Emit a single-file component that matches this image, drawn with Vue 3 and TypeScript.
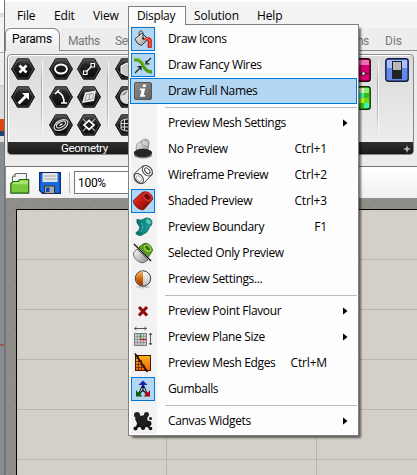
<script setup lang="ts">
interface Entry {
  kind: 'item' | 'sep'
  label?: string
  icon?: string
  shortcut?: string
  checked?: boolean
  active?: boolean
  submenu?: boolean
}

const menuBar: { label: string; cls: string }[] = [
  { label: 'File', cls: 'file' },
  { label: 'Edit', cls: 'edit' },
  { label: 'View', cls: 'view' },
  { label: 'Display', cls: 'display' },
  { label: 'Solution', cls: 'solution' },
  { label: 'Help', cls: 'help' },
]

const entries: Entry[] = [
  { kind: 'item', label: 'Draw Icons', icon: 'bucket', checked: true },
  { kind: 'item', label: 'Draw Fancy Wires', icon: 'wires', checked: true },
  { kind: 'item', label: 'Draw Full Names', icon: 'info', active: true },
  { kind: 'sep' },
  { kind: 'item', label: 'Preview Mesh Settings', submenu: true },
  { kind: 'item', label: 'No Preview', icon: 'none', shortcut: 'Ctrl+1' },
  { kind: 'item', label: 'Wireframe Preview', icon: 'wireframe', shortcut: 'Ctrl+2' },
  { kind: 'item', label: 'Shaded Preview', icon: 'shaded', shortcut: 'Ctrl+3', checked: true },
  { kind: 'item', label: 'Preview Boundary', icon: 'boundary', shortcut: 'F1' },
  { kind: 'item', label: 'Selected Only Preview', icon: 'selected' },
  { kind: 'item', label: 'Preview Settings...', icon: 'settings' },
  { kind: 'sep' },
  { kind: 'item', label: 'Preview Point Flavour', icon: 'cross', submenu: true },
  { kind: 'item', label: 'Preview Plane Size', icon: 'plane', submenu: true },
  { kind: 'item', label: 'Preview Mesh Edges', icon: 'mesh', shortcut: 'Ctrl+M' },
  { kind: 'item', label: 'Gumballs', icon: 'gumball', checked: true },
  { kind: 'sep' },
  { kind: 'item', label: 'Canvas Widgets', icon: 'splat', submenu: true },
]

/* Glyphs for the drop-down, drawn on a 24 x 24 grid */
const menuIcons: Record<string, string> = {
  bucket: `<path d="M4 12 11 6 17 12 10.500 18.500 6.500 16.500Z" fill="url(#metal)" stroke="#333"/>
    <path d="M8.500 9C6.500 2.500 12 2.500 12 7v4" fill="none" stroke="#333"/><circle cx="12" cy="11.500" r="1.100" fill="#222"/>
    <path d="M12.500 12.500C16 10 20.500 9.500 20.500 14v6.500h-3.500v-6c0-2-2-1.500-4.500-2Z" fill="#e8241a" stroke="#a80f0f" stroke-width=".6"/><path d="M14 12.300q4.500-2 5 2.200v5" fill="none" stroke="#ff9584" stroke-width=".8"/>`,
  wires: `<path d="M3 6.500C10 6.500 11 10 13 14s4 5 8 5" fill="none" stroke="#4f9d19" stroke-width="3.400"/>
    <path d="M3 5.500C10 5.500 12 9.500 14 13.500" fill="none" stroke="#8ed23c" stroke-width="1"/>
    <path d="m20 5-5.500 5.500M15 7.500v3.300h3.300M4 20l6-6M6.500 13.700H10v3.500" fill="none" stroke="#18241c" stroke-width="1.200"/>`,
  info: `<rect x="3.500" y="3.500" width="17" height="17" rx="1.500" fill="url(#slate)" stroke="#555"/>
    <path d="M12.200 5.500h3l-.6 2.500h-3ZM9 9.500h5.300l-1.700 6.500h1.700l-.5 1.800H9l1.600-6.500H8.600Z" fill="#fff"/>`,
  none: `<path d="M6 7 13 2.500c3-1 5 1 5 3L17 13l-10 3-2-5Z" fill="url(#metal)" stroke="#777" stroke-width=".7"/><ellipse cx="14" cy="6" rx="4" ry="3" transform="rotate(30 14 6)" fill="#ccc" stroke="#888" stroke-width=".7"/>
    <ellipse cx="12" cy="18.500" rx="9" ry="3" fill="#8c8c8c"/><ellipse cx="12" cy="16" rx="9.200" ry="4.200" fill="#25282a"/>`,
  wireframe: `<path d="M3 11 11 3.500c4-2 10 3 10.500 7.500L13 20c-4 2-10-3-10-9Z" fill="#fff" stroke="#444" stroke-width="1"/>
    <ellipse cx="16.300" cy="7.800" rx="5.800" ry="4.300" transform="rotate(48 16.300 7.800)" fill="#fff" stroke="#444"/><ellipse cx="16.300" cy="7.800" rx="3.400" ry="2" transform="rotate(48 16.300 7.800)" fill="none" stroke="#444"/>
    <ellipse cx="7.800" cy="15.500" rx="5.500" ry="4" transform="rotate(48 7.800 15.500)" fill="none" stroke="#444"/><ellipse cx="8" cy="15.500" rx="3.300" ry="2" transform="rotate(48 8 15.500)" fill="none" stroke="#888" stroke-width=".7"/>`,
  shaded: `<path d="M2.500 11.500 11 3.500c4-2 10 2.500 10.500 7L13 20.500c-4 1.500-11-4-10.500-9Z" fill="url(#red)" stroke="#6c0909" stroke-width=".8"/>
    <ellipse cx="16.300" cy="7.800" rx="5.700" ry="4.300" transform="rotate(42 16.300 7.800)" fill="#d9342a" stroke="#8d1010" stroke-width=".7"/><ellipse cx="16.300" cy="7.800" rx="3.500" ry="2.200" transform="rotate(42 16.300 7.800)" fill="#720b0b"/>`,
  boundary: `<path d="M5 3.500 10 5l6-2 4 4-1 6-4 5-6 3-4-2 3-7Z" fill="#777" opacity=".3"/>
    <path d="M6 4.500q4 2 9-1.500 6 0 6 4.500 0 3-2.500 4.500L16 17l-6 3.500q-5 0-5-3 4-1 4-5.500L6 8Z" fill="url(#teal)" stroke="#07635f" stroke-width=".8"/>
    <path d="M15 3.500q5.500 0 5.500 5l-3 1.500q-4-2-2.500-6.500Z" fill="#55c7bf" stroke="#08716b" stroke-width=".7"/><path d="M10.500 8q3 5-1 9" fill="none" stroke="#3fb9b0"/>`,
  selected: `<path d="M2.500 12 6 8l11 11-4 2.500C8 23 2 17 2.500 12Z" fill="url(#metal)" stroke="#555" stroke-width=".8"/>
    <path d="M8 6 13 2.500c4-1 8 3 8.500 7L17.500 16Z" fill="#63aa16" stroke="#285d05" stroke-width=".8"/><ellipse cx="16.500" cy="7.300" rx="5" ry="3.700" transform="rotate(42 16.500 7.300)" fill="#9bd64b" stroke="#397209" stroke-width=".7"/><ellipse cx="16.500" cy="7" rx="3" ry="1.800" transform="rotate(42 16.500 7)" fill="#3c7809"/>
    <path d="m3 3 17 17" stroke="#111" stroke-width="1.300"/>`,
  settings: `<ellipse cx="12" cy="20" rx="7" ry="1.500" fill="#aaa" opacity=".5"/><circle cx="12" cy="11.500" r="7.700" fill="url(#ball)" stroke="#43352d"/><path d="M12 4.300a7.200 7.200 0 0 0 0 14.400Z" fill="url(#amber)"/>`,
  cross: `<path d="m8 8 8 8.500m0-8.500-8 8.500" stroke="#930d0d" stroke-width="3.200"/>`,
  plane: `<path d="M3.500 8.500h12v12h-12Z" fill="#c9c9c9" stroke="#777"/><path d="M6.500 8.500v12m3-12v12m3-12v12m-9-9h12m-12 3h12m-12 3h12" stroke="#888" stroke-width=".7"/>
    <path d="M9.500 9v5.500" stroke="#08a010" stroke-width="1.200"/><path d="M9.500 14.500H15" stroke="#cc1111" stroke-width="1.200"/>
    <path d="M3.500 3.500h12M5.500 2l-2 1.500 2 1.500m8-3 2 1.500-2 1.500M19.500 8v12m-1.500-10 1.500-2 1.500 2m-3 8 1.500 2 1.500-2" fill="none" stroke="#444" stroke-width=".9"/>`,
  mesh: `<rect x="4.500" y="4.500" width="15" height="15" fill="url(#orange)" stroke="#401900"/><path d="M7.500 5v14m3-10v10m3-5v5M5 7.500h2.500M5 10.500h5M5 13.500h7M5 16.500h9" stroke="#652800" stroke-width=".8"/><path d="m4 2.500 12.500 18.500" stroke="#1b0d08" stroke-width="1.500"/>`,
  gumball: `<path d="M12 11V5" stroke="#1524ab" stroke-width="2"/><path d="m12 3.500 4.500 4.500h-9Z" fill="#1524ab"/><path d="M12 9v4.500l-5 4m5-4 5 4" stroke="#111" stroke-width="1.200" fill="none"/>
    <path d="m11 9-2.500 6m4.500-6 2.500 6" stroke="#111"/><path d="M5 13v6.500h6.500l-2-2 1-1.200-1.800-1.800L7 15.500Z" fill="#08601c"/><path d="M19 13v6.500h-6.500l2-2-1-1.200 1.800-1.800 1.700 1Z" fill="#9b1111"/>`,
  splat: `<path d="M6 6q6 2 8-1l3 2-1 4 4 2-1 4-4 1-3 3-3-3-4 1 1-5-2-4Z" fill="#1e1e1e"/><circle cx="6" cy="6" r="3" fill="#222"/><circle cx="15.500" cy="5.500" r="2.500" fill="#222"/><circle cx="19.500" cy="9.500" r="1.500" fill="#222"/><circle cx="18" cy="14.500" r="2.500" fill="#191919"/><circle cx="4.500" cy="19.500" r="2" fill="#111"/><circle cx="12" cy="19" r="2" fill="#111"/><circle cx="19.500" cy="19.500" r="1.800" fill="#111"/><path d="m9 15-4 4m10-3 4 3" stroke="#111" stroke-width="2"/>`,
}

/* White marks placed inside the hexagonal component buttons, 24 x 22 */
const hexColumns: string[][] = [
  [
    `<path d="m8.500 7.500 7 7m0-7-7 7" stroke="#fff" stroke-width="2.600"/>`,
    `<path d="m6.500 16.500 7-7-2.500-2.500h7v7l-2.500-2.500-7 7Z" fill="#fff"/>`,
  ],
  [
    `<ellipse cx="12" cy="11" rx="6" ry="4.500" fill="none" stroke="#fff" stroke-width="1.800"/>`,
    `<path d="M8 5.500C13 7 15 11 15 17M6 8l4-4M12 17h6" fill="none" stroke="#fff" stroke-width="1.700"/>`,
    `<ellipse cx="12" cy="11" rx="7.500" ry="4.500" transform="rotate(-30 12 11)" fill="none" stroke="#ddd" stroke-width="1.200"/><ellipse cx="12" cy="10.500" rx="5" ry="2.600" transform="rotate(-30 12 10.500)" fill="none" stroke="#eee"/><ellipse cx="12" cy="10.500" rx="2" ry=".8" transform="rotate(-30 12 10.500)" fill="#eee"/>`,
  ],
  [
    `<path d="m8 15 8-8" stroke="#fff" stroke-width="1.500"/><path d="M6.500 13h3.500v3.500H6.500ZM14 5.500h3.500V9H14Z" fill="#111" stroke="#fff" stroke-width="1.200"/>`,
    `<path d="M8 6.500 19 4.500 17 15 5 17Z" fill="#eee"/><path d="M9.500 8.500 16.500 7.300 15.500 13 8 14.500Z" fill="none" stroke="#999"/><path d="m13 8-1 5" stroke="#888"/>`,
    `<path d="m12 6.500 5 4.500-5 4.500L7 11Z" fill="none" stroke="#fff" stroke-width="1.700"/><path d="m6 5 3 3m6 0 3-3M6 17l3-3m6 0 3 3" stroke="#aaa" stroke-width="1.200"/>`,
  ],
  [
    `<path d="m6 8 6-3 6 3v7l-6 3-6-3Z" fill="#ccc" stroke="#fff"/>`,
    `<circle cx="12" cy="11" r="7" fill="#ddd"/><path d="M7 9q3 0 5-4" stroke="#888"/>`,
    `<path d="M6 7q6-4 12 0v8q-6 4-12 0Z" fill="#222" stroke="#ddd"/><path d="M9.500 5.500v11m4-11v11M6 9.500h12M6 13h12" stroke="#ddd"/>`,
  ],
]
</script>

<template>
  <div class="screen">
    <svg class="defs" width="0" height="0" aria-hidden="true">
      <defs>
        <linearGradient id="metal" x2="1" y2="1"><stop stop-color="#fff" /><stop offset="1" stop-color="#8c8c8c" /></linearGradient>
        <linearGradient id="slate" x2="1" y2="1"><stop stop-color="#8e8e8e" /><stop offset="1" stop-color="#5f5f5f" /></linearGradient>
        <linearGradient id="red" x2="1" y2="1"><stop stop-color="#f04438" /><stop offset=".5" stop-color="#bd1712" /><stop offset="1" stop-color="#660808" /></linearGradient>
        <linearGradient id="teal"><stop stop-color="#056b68" /><stop offset="1" stop-color="#20aaa3" /></linearGradient>
        <linearGradient id="ball" x2="0" y2="1"><stop stop-color="#fff" /><stop offset="1" stop-color="#bbb" /></linearGradient>
        <linearGradient id="amber" x2="0" y2="1"><stop stop-color="#f5b65e" /><stop offset=".5" stop-color="#d26810" /><stop offset="1" stop-color="#8d3600" /></linearGradient>
        <linearGradient id="orange" x2="0" y2="1"><stop stop-color="#ffb31c" /><stop offset="1" stop-color="#f36205" /></linearGradient>
        <linearGradient id="hex" x2="0" y2="1"><stop stop-color="#555" /><stop offset=".3" stop-color="#222" /><stop offset="1" stop-color="#080808" /></linearGradient>
      </defs>
    </svg>

    <div class="backdrop"><i class="smudge"></i><i class="axis"></i></div>

    <main class="window">
      <nav class="menubar">
        <span v-for="m in menuBar" :key="m.label" :class="['top', m.cls]">{{ m.label }}</span>
      </nav>

      <div class="tabs">
        <span class="tab current">Params</span>
        <span class="tab maths">Maths</span>
        <span class="tab sets">Sets</span>
        <span class="tab trans">Trans</span>
        <span class="tab dis">Dis</span>
      </div>

      <section class="ribbon">
        <div class="group">
          <div class="tools">
            <template v-for="(col, c) in hexColumns" :key="c">
              <div class="column">
                <svg v-for="(mark, r) in col" :key="r" class="hexicon" viewBox="0 0 24 22">
                  <path d="M6.500.8h11L23.500 11l-6 10.200h-11L.5 11Z" fill="url(#hex)" stroke="#151515" />
                  <path d="M7 2h10l5 9-5 9H7L2 11Z" fill="none" stroke="#777" stroke-width=".5" />
                  <g v-html="mark"></g>
                </svg>
              </div>
              <i v-if="c === 0 || c === 2" class="rule"></i>
            </template>
            <div class="spacer"></div>
            <div class="column tiles">
              <svg class="tile" viewBox="0 0 24 24"><rect x=".8" y=".8" width="22.400" height="22.400" rx="2.500" fill="#d60073" stroke="#260012" stroke-width="1.400" /><path d="M2 2h20v5H2Z" fill="#ec70ad" /><path d="M1 15.500h22" stroke="#4c0028" /><circle cx="16.500" cy="15.500" r="1.700" fill="#fff" stroke="#222" /></svg>
              <svg class="tile" viewBox="0 0 24 24"><rect x=".8" y=".8" width="22.400" height="22.400" rx="2.500" fill="#70d916" stroke="#07320e" stroke-width="1.400" /><path d="M12 2h6v5h-6Z" fill="#dcf7b5" /><path d="M17 2h5v5h-5Z" fill="#8fed7b" /><path d="M12 7h5v5h-5ZM17 17h5v5h-5Z" fill="#43efac" /><path d="M17 7h5v5h-5ZM12 17h5v5h-5Z" fill="#37bd18" /><path d="M12 12h5v5h-5Z" fill="#b9ef20" /></svg>
            </div>
            <i class="rule last"></i>
            <div class="column tiles end">
              <svg class="tile" viewBox="0 0 24 24"><rect x=".8" y=".8" width="22.400" height="22.400" rx="2.500" fill="#6389ee" stroke="#111a39" stroke-width="1.400" /><path d="M2 2h20v8H2Z" fill="#a9bdfa" /><rect x="7" y="3" width="10" height="18" fill="#222" /><rect x="8" y="4" width="8" height="8" fill="#b9b9b9" /></svg>
            </div>
          </div>
          <footer class="caption"><span>Geometry</span><svg class="plus" viewBox="0 0 8 8"><path d="M4 0 5 3 8 4 5 5 4 8 3 5 0 4 3 3Z" fill="#bbb" /></svg></footer>
        </div>
      </section>

      <div class="toolbar">
        <svg class="open" viewBox="0 0 20 24"><path d="M2.500 12V5.500L5.500 2.500h11V12" fill="#f4f4f4" stroke="#666" /><path d="M5.500 2.500v3h-3" fill="none" stroke="#888" /><path d="M.8 22.200V12.500L3 10.500h5l1.500-2h9.200v13.700Z" fill="#79c83d" stroke="#1c6714" stroke-width="1.200" /><path d="M1.500 13 4 11h5l2-1.500h7v4Z" fill="#a8e56e" /></svg>
        <svg class="save" viewBox="0 0 22 22"><path d="M.7.7h20.600v20.600H3.500L.7 18.500Z" fill="#176be0" stroke="#06256b" stroke-width="1.300" /><path d="M3.500 1v9h15V1Z" fill="#e2e4e6" /><path d="M5 4h12M5 7h12" stroke="#aaa" /><rect x="5.500" y="14" width="10" height="7.500" fill="#a9a9a9" stroke="#333" /><rect x="7" y="15.500" width="3.500" height="4.500" fill="#0b49be" /></svg>
        <i class="divider"></i>
        <span class="zoombox">100%</span>
      </div>

      <div class="canvas"><div class="sheet"></div></div>
    </main>

    <div class="dropdown">
      <template v-for="(e, i) in entries" :key="i">
        <div v-if="e.kind === 'sep'" class="sep"></div>
        <div v-else :class="['entry', { active: e.active }]">
          <span :class="['iconbox', { checked: e.checked }]"><svg v-if="e.icon" viewBox="0 0 24 24" v-html="menuIcons[e.icon]"></svg></span>
          <span class="label">{{ e.label }}</span>
          <span class="shortcut">{{ e.shortcut }}</span>
          <span class="more"><i v-if="e.submenu"></i></span>
        </div>
      </template>
    </div>
  </div>
</template>

<style>
body { margin: 0; overflow: hidden; }
</style>

<style scoped>
.screen { position: relative; display: flex; width: 417px; height: 475px; overflow: hidden; font: 12px/16px "Open Sans", "Noto Sans", sans-serif; letter-spacing: -0.15px; color: #000; background: #eee; white-space: nowrap; }
.screen * { box-sizing: border-box; }
.defs { position: absolute; }
.backdrop { width: 4px; flex: none; display: flex; flex-direction: column; background: linear-gradient(#fff 0 13px, #ddd 13px 17px, #f4f4f4 17px 52px, #9cb2d1 52px 53px, #eee 53px 85px, #ccc 85px 87px, #ddd 87px 142px, #868d93 142px); }
.smudge { margin-top: 119px; height: 17px; background: linear-gradient(#de4312 0 12px, #25427a 12px); }
.axis { margin-top: 208px; height: 2px; background: #9b5657; }
.window { flex: 1; min-width: 0; display: flex; flex-direction: column; border-left: 1px solid #747474; background: #ececec; }
.menubar { height: 28px; flex: none; border-top: 2px solid #fff; background: #f3f3f3; display: flex; align-items: flex-start; }
.top { margin-top: 6px; flex: none; }
.file { margin-left: 12px; width: 37px; }
.edit { width: 39px; }
.view { width: 35px; }
.display { width: 58px; height: 19px; margin: 4px 8px 0 0; padding: 1px 0 0 8px; border: 1px solid #808080; border-bottom: 0; background: #fdfdfd; position: relative; z-index: 3; letter-spacing: -0.35px; }
.solution { width: 63px; }
.help { width: 40px; }
.tabs { height: 23px; flex: none; display: flex; background: #ededed; border-bottom: 1px solid #8c8c8c; color: #777; font-family: Roboto, "Liberation Sans", sans-serif; letter-spacing: -0.4px; }
.tab { flex: none; padding-top: 5px; }
.current { height: 23px; width: 55px; padding: 2px 0 0 6px; border: 1px solid #888; border-bottom: 0; border-radius: 6px 7px 0 0; background: linear-gradient(#fff, #e9e9e9); color: #000; letter-spacing: -0.2px; }
.maths { margin-left: 8px; width: 47px; }
.sets { width: 226px; }
.trans { width: 44px; }
.dis { width: 30px; letter-spacing: 0; }
.ribbon { height: 115px; flex: none; padding: 3px 3px 11px 2px; background: #ececec; }
.group { height: 101px; border: 1px solid #888; border-radius: 4px; overflow: hidden; background: linear-gradient(#d9d9d9, #f0f0f0); box-shadow: inset 1px 1px #fff; }
.tools { height: 87px; display: flex; padding: 3px 3px 0; }
.column { width: 24px; flex: none; margin-right: 4px; display: flex; flex-direction: column; gap: 6px; }
.hexicon { width: 24px; height: 22px; }
.rule { width: 1px; flex: none; height: 72px; margin: 3px 7px 0 2px; background: linear-gradient(transparent, #aaa 30%, #bbb 75%, transparent); box-shadow: 1px 0 #f5f5f5; }
.spacer { flex: 1; }
.tiles { gap: 4px; }
.tile { width: 24px; height: 24px; }
.column.end { margin-right: 1px; }
.caption { height: 13px; display: flex; justify-content: space-between; align-items: center; padding: 0 2px 0 53px; color: #fff; background: linear-gradient(#303030, #171717); font: 11.5px/13px Roboto, "Liberation Sans", sans-serif; letter-spacing: -0.4px; }
.plus { width: 8px; height: 8px; }
.toolbar { height: 32px; flex: none; display: flex; align-items: center; padding-left: 4px; border-top: 1px solid #777; border-left: 1px solid #888; background: linear-gradient(#fff, #f0f0f0); }
.open { width: 20px; height: 24px; flex: none; }
.save { width: 22px; height: 22px; margin-left: 9px; flex: none; }
.divider { width: 1px; height: 21px; margin: 0 4px 0 8px; background: #bbb; }
.zoombox { display: flex; align-items: center; width: 70px; height: 23px; padding-left: 3px; border: 1px solid #777; background: #fff; font-family: Roboto, "Liberation Sans", sans-serif; letter-spacing: -0.3px; }
.canvas { flex: 1; padding: 11px 0 0 10px; background: repeating-linear-gradient(135deg, #92908a 0 2px, #8a8882 2px 3px); border-left: 1px solid #777; }
.sheet { height: 100%; border: solid #000; border-width: 1px 0 0 1px; background-color: #d4d0c8; background-image: linear-gradient(90deg, #b9b5ae 1px, transparent 1px), linear-gradient(#b9b5ae 1px, transparent 1px); background-size: 150px 100%, 100% 50px; background-position: 149px 0, 0 49px; }
.dropdown { position: absolute; z-index: 2; left: 128px; top: 24px; width: 231px; height: 412px; padding: 1px; border: 1px solid #808080; background: linear-gradient(#f2f2f2, #f2f2f2) 2px 1px / 26px 408px no-repeat #fdfdfd; box-shadow: 3px 3px 2px -1px rgba(0, 0, 0, .55); }
.entry { height: 26px; display: flex; align-items: center; padding-left: 1px; }
.entry.active { background: #b3d6f2; box-shadow: inset 0 0 0 1px #0078d7; }
.iconbox { width: 24px; height: 24px; flex: none; margin-right: 13px; }
.iconbox svg { display: block; width: 24px; height: 24px; }
.checked { background: #b3d6f2; box-shadow: inset 0 0 0 1px #0078d7; }
.label { flex: 1; letter-spacing: -0.35px; }
.shortcut { text-align: right; }
.more { width: 30px; display: flex; justify-content: center; }
.more i { width: 5px; height: 8px; margin-left: 6px; background: #000; clip-path: polygon(0 0, 100% 50%, 0 100%); }
.sep { height: 6px; padding: 3px 0 0 35px; }
.sep::before { content: ""; display: block; height: 1px; background: #bdbdbd; }
</style>
